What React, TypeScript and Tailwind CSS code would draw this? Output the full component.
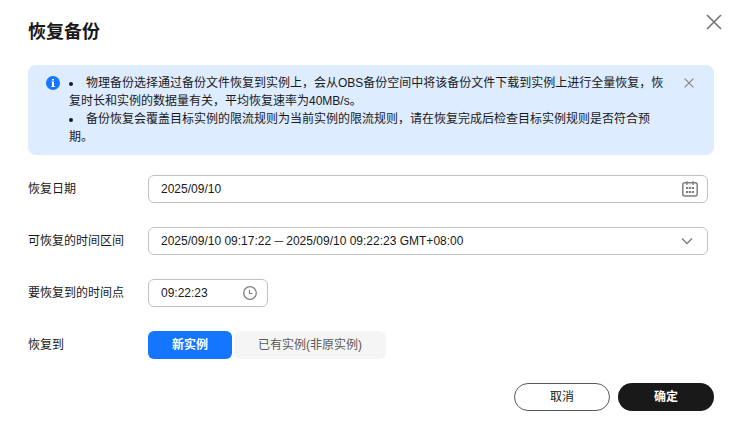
import { useState } from "react"

interface FormRowProps {
  label: string
  htmlFor: string
  children: React.ReactNode
}

function CloseIcon({ className }: { className: string }) {
  return (
    <svg viewBox="0 0 16 16" className={className} fill="none" stroke="currentColor" aria-hidden="true">
      <path d="M1 1l14 14M15 1L1 15" strokeWidth="1.7" />
    </svg>
  )
}

function InfoIcon() {
  return (
    <svg viewBox="0 0 14 14" className="size-3.5 shrink-0 mt-0.5" aria-hidden="true">
      <circle cx="7" cy="7" r="7" fill="#1476ff" />
      <path d="M6 3h2v1.6H6zM5.4 5.5H8V10h.9v1.1H5.2V10H6V6.6h-.6z" fill="#fff" />
    </svg>
  )
}

function CalendarIcon() {
  return (
    <svg viewBox="0 0 16 16" className="size-4" fill="none" stroke="currentColor" aria-hidden="true">
      <rect x="0.8" y="1.7" width="14.4" height="13.3" rx="2" strokeWidth="1.5" />
      <path d="M4.9 0.3v3.4M11.1 0.3v3.4" strokeWidth="1.5" />
      <path d="M4 7h2.2M6.9 7h2.2M9.8 7H12M4 11h2.2M6.9 11h2.2M9.8 11H12" strokeWidth="2" />
    </svg>
  )
}

function ClockIcon() {
  return (
    <svg viewBox="0 0 14 14" className="size-3.5" fill="none" stroke="currentColor" aria-hidden="true">
      <circle cx="7" cy="7" r="6.3" strokeWidth="1.3" />
      <path d="M6.5 4v3.5h3" strokeWidth="1.2" />
    </svg>
  )
}

function ChevronIcon() {
  return (
    <svg viewBox="0 0 12 12" className="size-3" fill="none" stroke="currentColor" aria-hidden="true">
      <path d="M1 3.5l5 5 5-5" strokeWidth="1.5" />
    </svg>
  )
}

function FormRow({ label, htmlFor, children }: FormRowProps) {
  return (
    <div className="flex items-center">
      <label htmlFor={htmlFor} className="w-[120px] shrink-0">
        {label}
      </label>
      {children}
    </div>
  )
}

export default function App() {
  const [date, setDate] = useState("2025/09/10")
  const [time, setTime] = useState("09:22:23")
  const [target, setTarget] = useState("new")
  const [showNotice, setShowNotice] = useState(true)

  const tabClass = "h-7 px-6 rounded-md"

  return (
    <div
      role="dialog"
      aria-labelledby="title"
      className="bg-white pl-7 pr-[25px] pt-3.5 pb-6 text-xs leading-[18px] text-[#191919] font-['Liberation_Sans','Noto_Sans_CJK_SC',sans-serif]"
    >
      {/* Header */}
      <div className="flex items-start justify-between -mr-2">
        <h1 id="title" className="text-lg leading-6 font-bold pt-1.5">
          恢复备份
        </h1>
        <button type="button" aria-label="关闭" className="text-[#777777]">
          <CloseIcon className="size-4" />
        </button>
      </div>

      {/* Notice */}
      {showNotice && (
        <div className="mt-[21px] flex items-start rounded-lg bg-[#deecff] pl-[18px] pr-5 py-[9px]">
          <InfoIcon />
          <ul className="ml-[9px] mr-3 flex-1 list-disc list-inside">
            <li>物理备份选择通过备份文件恢复到实例上，会从OBS备份空间中将该备份文件下载到实例上进行全量恢复，恢复时长和实例的数据量有关，平均恢复速率为40MB/s。</li>
            <li>备份恢复会覆盖目标实例的限流规则为当前实例的限流规则，请在恢复完成后检查目标实例规则是否符合预期。</li>
          </ul>
          <button
            type="button"
            aria-label="关闭提示"
            onClick={() => setShowNotice(false)}
            className="mt-1 text-[#808080]"
          >
            <CloseIcon className="size-2.5" />
          </button>
        </div>
      )}

      {/* Form */}
      <div className="mt-5 pr-1.5 flex flex-col gap-6">
        <FormRow label="恢复日期" htmlFor="date">
          <div className="flex h-7 flex-1 items-center rounded-md border border-[#c2c2c2] pl-3 pr-[9px] text-[#808080]">
            <input
              id="date"
              type="text"
              value={date}
              onChange={(e) => setDate(e.target.value)}
              className="min-w-0 flex-1 text-[#191919] outline-none"
            />
            <CalendarIcon />
          </div>
        </FormRow>

        <FormRow label="可恢复的时间区间" htmlFor="range">
          <div className="relative h-7 flex-1 text-[#808080]">
            <select
              id="range"
              className="h-full w-full appearance-none rounded-md border border-[#c2c2c2] px-3 text-[#191919] outline-none"
            >
              <option>2025/09/10 09:17:22 ─ 2025/09/10 09:22:23 GMT+08:00</option>
            </select>
            <span className="pointer-events-none absolute right-[15px] top-2">
              <ChevronIcon />
            </span>
          </div>
        </FormRow>

        <FormRow label="要恢复到的时间点" htmlFor="time">
          <div className="flex h-7 w-[120px] items-center rounded-md border border-[#c2c2c2] pl-3 pr-[10px] text-[#808080]">
            <input
              id="time"
              type="text"
              value={time}
              onChange={(e) => setTime(e.target.value)}
              className="min-w-0 flex-1 text-[#191919] outline-none"
            />
            <ClockIcon />
          </div>
        </FormRow>

        <div className="flex items-center">
          <span id="target" className="w-[120px] shrink-0">
            恢复到
          </span>
          <div role="group" aria-labelledby="target" className="flex gap-0.5">
            <button
              type="button"
              aria-pressed={target === "new"}
              onClick={() => setTarget("new")}
              className={`${tabClass} ${target === "new" ? "bg-[#1476ff] font-bold text-white" : "bg-[#f5f5f5] text-[#595959]"}`}
            >
              新实例
            </button>
            <button
              type="button"
              aria-pressed={target === "existing"}
              onClick={() => setTarget("existing")}
              className={`${tabClass} ${target === "existing" ? "bg-[#1476ff] font-bold text-white" : "bg-[#f5f5f5] text-[#595959]"}`}
            >
              已有实例(非原实例)
            </button>
          </div>
        </div>
      </div>

      {/* Footer */}
      <div className="mt-6 flex justify-end gap-2">
        <button type="button" className="h-7 w-24 rounded-full border border-[#595959]">
          取消
        </button>
        <button type="button" className="h-7 w-24 rounded-full bg-[#191919] font-bold text-white">
          确定
        </button>
      </div>
    </div>
  )
}
